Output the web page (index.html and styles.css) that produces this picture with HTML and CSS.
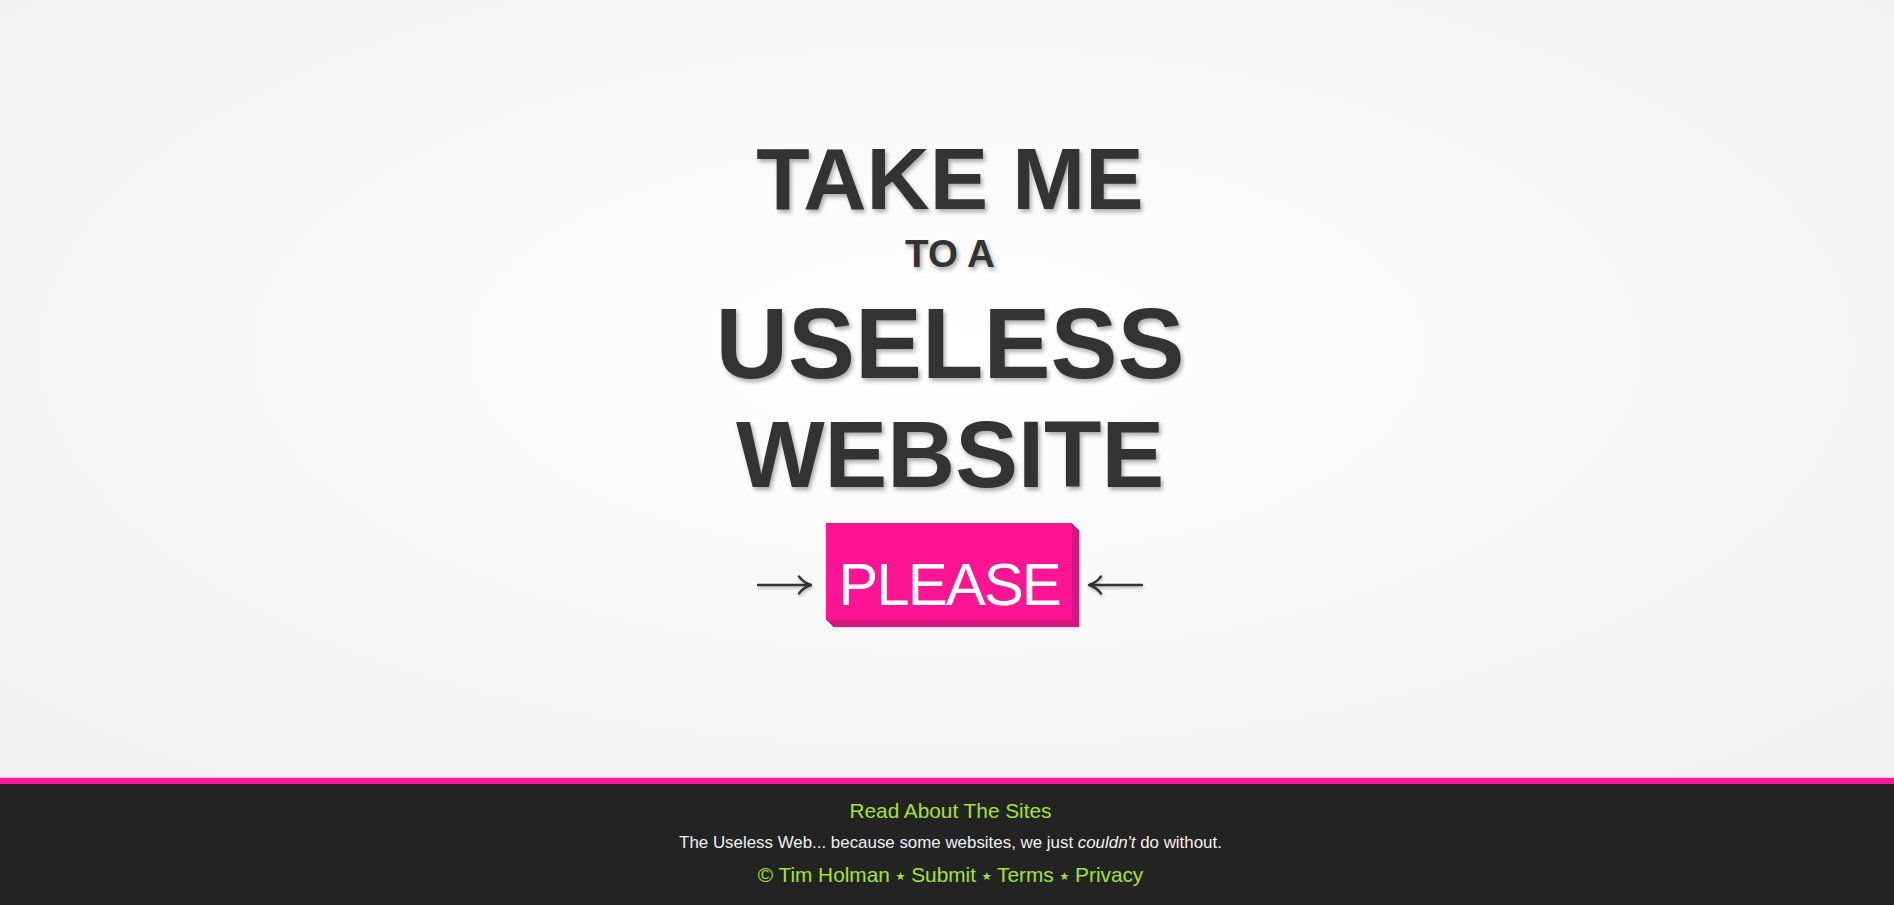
FILE: index.html
```html
<!DOCTYPE html>
<html lang="en">
<head>
<meta charset="utf-8">
<title>The Useless Web</title>
<link rel="stylesheet" href="styles.css">
</head>
<body>
<main class="stage">
  <h1 class="title">
    <span class="line line-take">TAKE ME</span>
    <span class="line line-toa">TO A</span>
    <span class="line line-useless">USELESS</span>
    <span class="line line-website">WEBSITE</span>
  </h1>
  <div class="go-row">
    <svg class="arrow" width="56" height="22" viewBox="0 0 56 22" aria-hidden="true">
      <path d="M1 11 H53" />
      <path d="M42 2.5 Q47 9 54 11 Q47 13 42 19.5" />
    </svg>
    <button class="please" type="button">PLEASE</button>
    <svg class="arrow" width="56" height="22" viewBox="0 0 56 22" aria-hidden="true">
      <path d="M3 11 H55" />
      <path d="M14 2.5 Q9 9 2 11 Q9 13 14 19.5" />
    </svg>
  </div>
</main>
<footer class="footer">
  <a class="f-link f-about" href="#">Read About The Sites</a>
  <p class="f-tagline">The Useless Web... because some websites, we just <em>couldn't</em> do without.</p>
  <p class="f-links"><a class="f-link" href="#">© Tim Holman</a> <span class="star">★</span> <a class="f-link" href="#">Submit</a> <span class="star">★</span> <a class="f-link" href="#">Terms</a> <span class="star">★</span> <a class="f-link" href="#">Privacy</a></p>
</footer>
</body>
</html>
```

FILE: styles.css
```css
html, body {
  margin: 0;
  padding: 0;
  height: 100%;
}

body {
  display: flex;
  flex-direction: column;
  font-family: "Liberation Sans", Arial, sans-serif;
  background: #f2f2f2;
  overflow: hidden;
}

.stage {
  height: 778px;
  flex: 0 0 778px;
  box-sizing: border-box;
  padding-top: 136px;
  padding-left: 6px;
  display: flex;
  flex-direction: column;
  align-items: center;
  background: radial-gradient(ellipse 75% 80% at 50% 45%, #ffffff 0%, #fafafa 35%, #f5f5f5 65%, #f1f1f1 100%);
}

.title {
  margin: 0;
  display: flex;
  flex-direction: column;
  align-items: center;
  font-weight: bold;
  color: #333333;
  text-shadow: 2px 3px 4px rgba(0, 0, 0, 0.32);
}

.line {
  display: block;
  white-space: nowrap;
}

.line-take {
  font-size: 87.5px;
  line-height: 86px;
}

.line-toa {
  font-size: 38.5px;
  line-height: 37px;
  margin-top: 13px;
}

.line-useless {
  font-size: 100.5px;
  line-height: 100px;
  margin-top: 21px;
}

.line-website {
  font-size: 94px;
  line-height: 92px;
  margin-top: 16px;
}

.go-row {
  margin-top: 22px;
  display: flex;
  align-items: flex-start;
}

.arrow {
  margin-top: 51px;
  fill: none;
  stroke: #333333;
  stroke-width: 2.4;
  stroke-linecap: round;
  stroke-linejoin: round;
  filter: drop-shadow(1px 2px 1.5px rgba(0, 0, 0, 0.25));
}

.arrow:first-child {
  margin-right: 13px;
}

.arrow:last-child {
  margin-left: 15px;
}

.please {
  width: 246px;
  height: 97px;
  box-sizing: border-box;
  padding: 27px 0 0 0;
  margin: 0;
  border: 0;
  background: #ff1493;
  color: #ffffff;
  font-family: "Liberation Sans", Arial, sans-serif;
  font-size: 60px;
  line-height: 60px;
  letter-spacing: -2px;
  text-align: center;
  display: block;
  cursor: pointer;
  box-shadow:
    1px 1px 0 #d6157f,
    2px 2px 0 #d6157f,
    3px 3px 0 #d6157f,
    4px 4px 0 #d6157f,
    5px 5px 0 #d6157f,
    6px 6px 0 #d6157f,
    7px 7px 0 #d6157f,
    8px 8px 3px rgba(0, 0, 0, 0.12);
}

.footer {
  flex: 1 0 auto;
  box-sizing: border-box;
  background: #232323;
  border-top: 6px solid #ff1493;
  box-shadow: 0 -2px 0 #ffd6ec;
  padding: 15px 0 18px 7px;
  display: flex;
  flex-direction: column;
  align-items: center;
  text-align: center;
}

.f-link {
  color: #a5e330;
  text-decoration: none;
}

.f-about {
  display: block;
  font-size: 20.8px;
  line-height: 24px;
}

.f-tagline {
  margin: 9.5px 0 0;
  font-size: 16.9px;
  line-height: 20px;
  color: #f2f2f2;
}

.f-links {
  margin: 10.5px 0 0;
  font-size: 20.8px;
  line-height: 24px;
  color: #a5e330;
}

.star {
  font-family: "DejaVu Sans", sans-serif;
  font-size: 11px;
  vertical-align: 2px;
  color: #a5e330;
}
```
